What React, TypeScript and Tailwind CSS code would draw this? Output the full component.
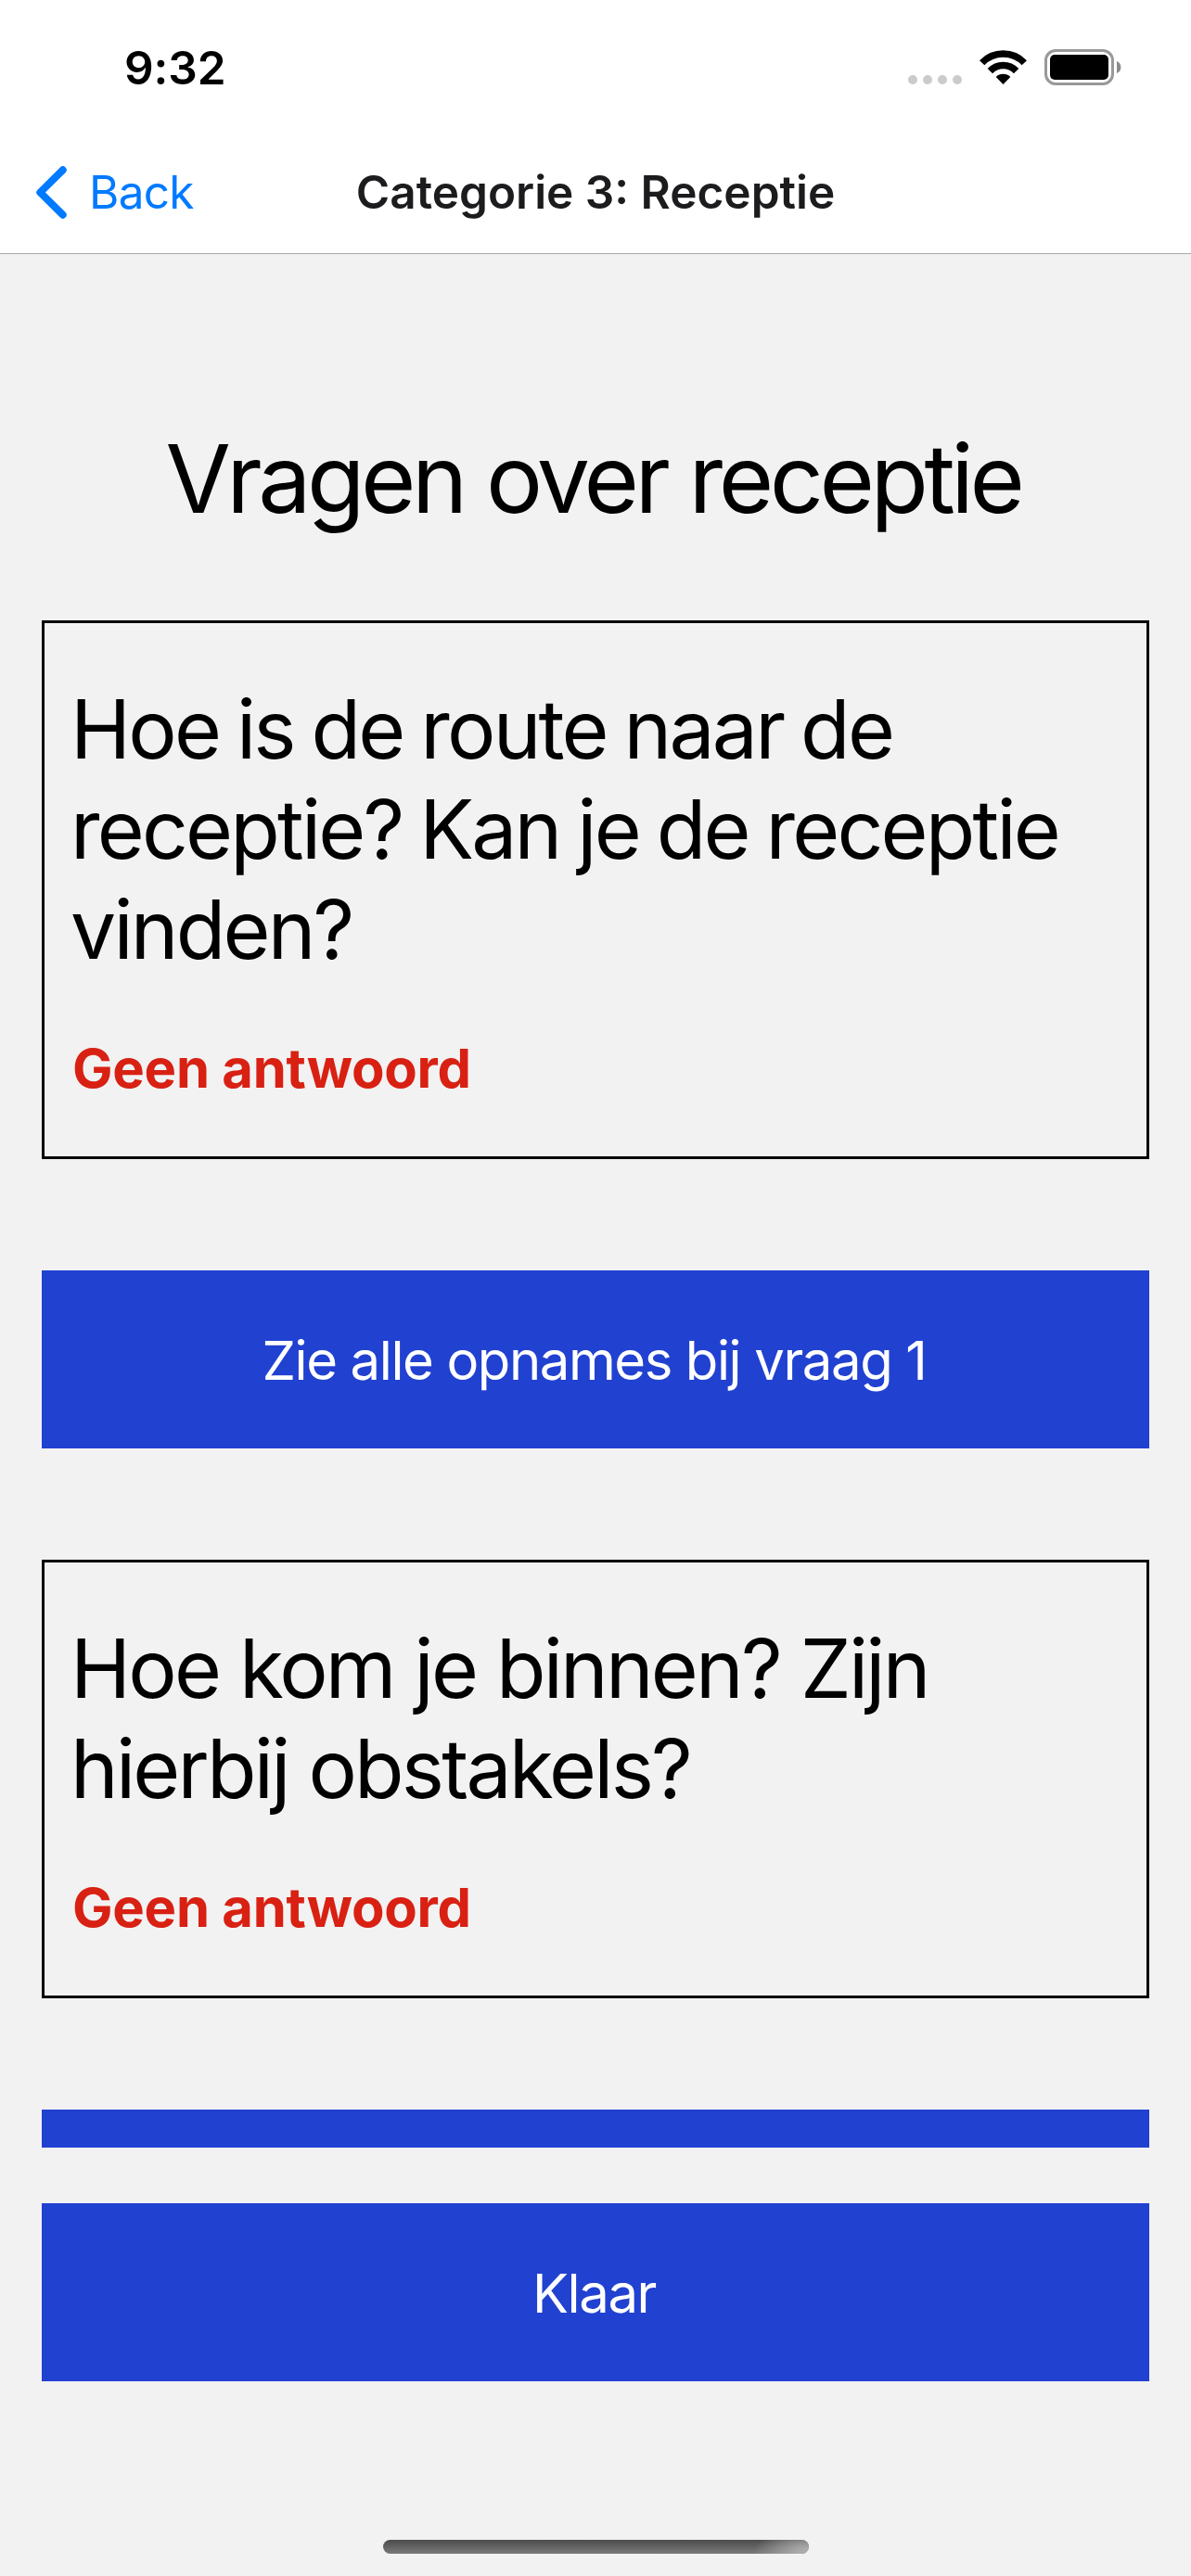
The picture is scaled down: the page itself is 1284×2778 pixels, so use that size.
import React from "react";

const sans = "font-['Inter','Liberation_Sans',sans-serif]";

function StatusBar() {
  return (
    <div className="flex h-[141px] items-start justify-between pl-[134px] pr-[75px] pt-[43px]">
      <span className="text-[49.5px] leading-[60px] font-semibold tracking-[-0.1px] text-black">9:32</span>
      <div className="flex items-end pt-[10px]">
        <div className="mr-[19px] flex gap-[6px] pb-px">
          {[0, 1, 2, 3].map((i) => (
            <span key={i} className="size-[10px] rounded-full bg-[#cbcbcb]" />
          ))}
        </div>
        <svg className="mr-[19px] h-[39px] w-[51px]" viewBox="0 0 51 39" fill="none">
          <path d="M2.700 14.700A31.700 31.700 0 0 1 48.300 14.700" stroke="#000" strokeWidth="7.4" />
          <path d="M11.400 23.600A19.400 19.400 0 0 1 39.600 23.600" stroke="#000" strokeWidth="7.400" />
          <path d="M25.500 38L17.700 30A11 11 0 0 1 33.300 30Z" fill="#000" />
        </svg>
        <svg className="h-[39px] w-[83px]" viewBox="0 0 83 39" fill="none">
          <rect x="1.500" y="1.500" width="72" height="36" rx="10.500" stroke="#999" strokeWidth="3" />
          <rect x="6" y="6" width="63" height="27" rx="5" fill="#000" />
          <path d="M78 13a7 7 0 0 1 0 13z" fill="#8c8c8c" />
        </svg>
      </div>
    </div>
  );
}

function Header() {
  return (
    <div className="grid h-[133px] grid-cols-[1fr_auto_1fr] items-start border-b border-[#a7a9a8] pt-[36px]">
      <button className="flex items-center pl-[39px] text-[#007aff]">
        <svg className="mr-[23px] h-[57px] w-[34px]" viewBox="0 0 34 57" fill="none">
          <path d="M28.700 4.300L4.300 28.500L28.700 52.700" stroke="currentColor" strokeWidth="8" strokeLinecap="round" strokeLinejoin="round" />
        </svg>
        <span className="text-[49.5px] leading-[60px] tracking-[-0.7px]">Back</span>
      </button>
      <h1 className="text-[49.5px] leading-[60px] font-semibold tracking-[0px] text-[#1c1c1e]">Categorie 3: Receptie</h1>
      <span />
    </div>
  );
}

function Question({ lines, spacing = "" }: { lines: string[]; spacing?: string }) {
  return (
    <section className="border-[3px] border-black px-[30px] pt-[60px] pb-[59px]">
      <p className={`-ml-[2px] text-[87.5px] leading-[108px] tracking-[-2.8px] whitespace-nowrap text-black ${spacing}`}>
        {lines.map((line) => (
          <span key={line} className="block">{line}</span>
        ))}
      </p>
      <p className="mt-[60px] text-[58px] leading-[72px] font-bold tracking-[-0.25px] text-[#d82113]">Geen antwoord</p>
    </section>
  );
}

function ActionButton({ label }: { label?: string }) {
  return (
    <button className="flex h-[192px] w-full shrink-0 items-center justify-center bg-[#2141d1] pt-[2px] pr-[3px] text-[58px] leading-[72px] tracking-[-1.4px] text-white">
      {label}
    </button>
  );
}

export default function App() {
  return (
    <div className={`${sans} flex h-[2778px] w-[1284px] flex-col overflow-hidden bg-[#f2f2f2]`}>
      <header className="bg-white">
        <StatusBar />
        <Header />
      </header>
      <main className="flex flex-1 flex-col px-[45px]">
        <div className="h-[2042px] overflow-hidden">
          <h2 className="pt-[179px] pr-[5px] text-center text-[102px] leading-[126px] tracking-[-4.5px] text-black">Vragen over receptie</h2>
          <div className="flex flex-col gap-[120px] pt-[90px]">
            <Question
              lines={["Hoe is de route naar de", "receptie? Kan je de receptie", "vinden?"]}
              spacing="[word-spacing:-3px]"
            />
            <ActionButton label="Zie alle opnames bij vraag 1" />
            <Question lines={["Hoe kom je binnen? Zijn", "hierbij obstakels?"]} />
            <ActionButton />
          </div>
        </div>
        <div className="mt-[60px]">
          <ActionButton label="Klaar" />
        </div>
        <div className="mt-[171px] flex justify-center">
          <div className="h-[15px] w-[459px] overflow-hidden rounded-full bg-linear-to-b from-[#4c4c4c] to-[#7a7a7a]">
            <div className="ml-auto h-full w-[80px] bg-[radial-gradient(ellipse_60px_30px_at_100%_100%,#adadad_15%,transparent)]" />
          </div>
        </div>
      </main>
    </div>
  );
}
